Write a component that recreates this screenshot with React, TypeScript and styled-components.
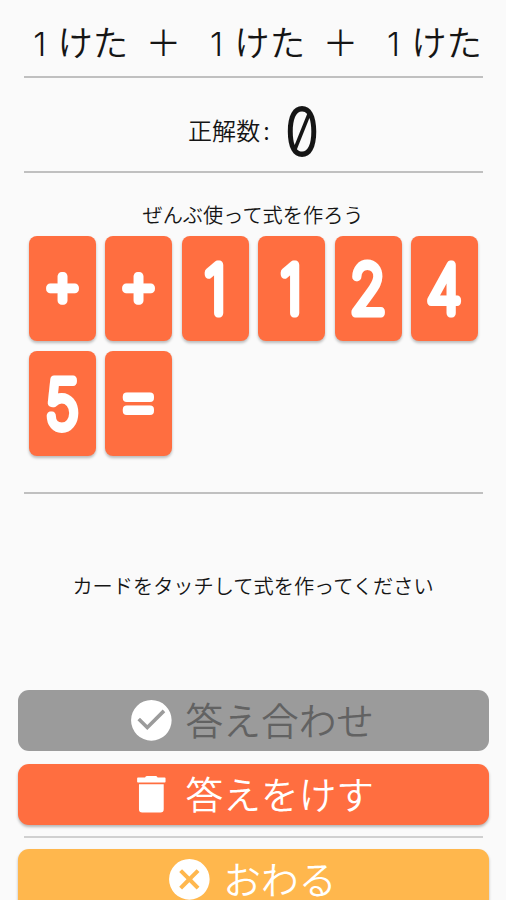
import React from "react";
import styled, { createGlobalStyle } from "styled-components";

const GlobalStyle = createGlobalStyle`
  * { box-sizing: border-box; }
  body {
    margin: 0;
    background: #fafafa;
    color: #151515;
    font-family: "Noto Sans CJK JP", "Noto Sans", sans-serif;
    font-weight: 350;
    overflow: hidden;
  }
`;

const Page = styled.main`
  width: 506px;
  height: 900px;
  overflow: hidden;
  display: flex;
  flex-direction: column;
  background: #fafafa;

  > * { flex: none; }
`;

const Title = styled.h1`
  margin: 0;
  height: 76px;
  padding: 6px 0 0 22px;
  font-size: 35.4px;
  line-height: 70px;
  font-weight: 350;
  white-space: nowrap;
  word-spacing: 0.276em;
`;

const Count = styled.span`
  display: inline-block;
  width: 35.4px;
  font: 300 33px/70px Inter, sans-serif;
  text-align: center;
`;

const Divider = styled.hr<{ $soft?: boolean }>`
  flex: none;
  width: 459px;
  height: 2px;
  margin: 0 0 0 24px;
  border: 0;
  background: ${(p) => (p.$soft ? "#d0d0d0" : "#c0c0c0")};
`;

const Score = styled.section`
  height: 93px;
  padding-left: 188px;
  display: flex;
  align-items: center;
`;

const ScoreLabel = styled.span`
  width: 93px;
  font-size: 24px;
  line-height: 36px;
  margin-top: 10px;
  letter-spacing: 0.1px;
  white-space: nowrap;
`;

const Colon = styled.span`
  margin-left: 3px;
`;

const ScoreSlot = styled.span`
  width: 42px;
  display: flex;
  justify-content: center;
  margin-top: 14px;
`;

const ScoreValue = styled.span`
  font: 400 67px/76px Inter, sans-serif;
  font-feature-settings: "zero";
  transform: scaleX(0.83);
`;

const Board = styled.section`
  height: 319px;
  padding-top: 26px;
`;

const Hint = styled.p`
  margin: 0;
  font-size: 20.2px;
  line-height: 32px;
  text-align: center;
  white-space: nowrap;
`;

const Cards = styled.div`
  margin: 5px 0 0 29px;
  display: grid;
  grid-template-columns: repeat(6, 67px);
  column-gap: 9.4px;
  row-gap: 9.5px;
`;

const Card = styled.button`
  height: 105px;
  padding: 0;
  border: 0;
  border-radius: 8px;
  background: #ff6e40;
  box-shadow: 0 2px 3px rgba(0, 0, 0, 0.26);
`;

const CardFace = styled.svg`
  display: block;
  width: 67px;
  height: 105px;
  font-family: Inter, sans-serif;
  font-weight: 100;
  text-anchor: middle;
  fill: #fff;
  stroke: #fff;
  stroke-linejoin: round;
  stroke-linecap: round;
`;

const Answer = styled.section`
  height: 195.5px;
  padding-top: 76px;
`;

const Actions = styled.section`
  display: flex;
  flex-direction: column;
`;

const Action = styled.button<{ $tone: string; $ink?: string; $flat?: boolean }>`
  flex: none;
  width: 471px;
  height: 61.5px;
  margin-left: 18px;
  padding: 0 6px 0 0;
  display: flex;
  align-items: center;
  justify-content: center;
  gap: 10px;
  border: 0;
  border-radius: 11px;
  background: ${(p) => p.$tone};
  color: ${(p) => p.$ink ?? "#fff"};
  box-shadow: ${(p) => (p.$flat ? "none" : "0 2px 3px rgba(0, 0, 0, 0.28)")};
  white-space: nowrap;

  & + & { margin-top: 12.5px; }
  & + hr { margin-top: 10.5px; }
  hr + & { margin-top: 11px; }
`;

const ActionLabel = styled.span`
  margin-bottom: 3px;
  font: 350 37.7px/38px "Noto Sans CJK JP", sans-serif;
`;

const Icon = styled.svg`
  flex: none;
  width: 48.7px;
  height: 48.7px;
  fill: #fff;
`;

const cards = ["+", "+", "1", "1", "2", "4", "5", "="];

const digitFace = { transform: "translate(33.2 77.3) scale(0.87 0.99)", fontSize: 67, strokeWidth: 9 };
const plusFace = { transform: "translate(33.5 69)", fontSize: 59, strokeWidth: 8.5 };
const equalsFace = { transform: "translate(33.5 72) scale(1 1)", fontSize: 68, strokeWidth: 8.2 };

function Glyph({ char }: { char: string }) {
  const face = char === "+" ? plusFace : char === "=" ? equalsFace : digitFace;
  return (
    <CardFace viewBox="0 0 67 105">
      <text {...face}>{char}</text>
    </CardFace>
  );
}

export default function App() {
  return (
    <Page>
      <GlobalStyle />
      <Title>
        <Count>1</Count>けた ＋ <Count>1</Count>けた ＋ <Count>1</Count>けた
      </Title>
      <Divider />
      <Score>
        <ScoreLabel>正解数<Colon>:</Colon></ScoreLabel>
        <ScoreSlot>
          <ScoreValue>0</ScoreValue>
        </ScoreSlot>
      </Score>
      <Divider />
      <Board>
        <Hint>ぜんぶ使って式を作ろう</Hint>
        <Cards>
          {cards.map((char, i) => (
            <Card key={i}>
              <Glyph char={char} />
            </Card>
          ))}
        </Cards>
      </Board>
      <Divider />
      <Answer>
        <Hint>カードをタッチして式を作ってください</Hint>
      </Answer>
      <Actions>
        <Action $tone="#9b9b9b" $ink="#626262" $flat>
          <Icon viewBox="0 0 24 24">
            <path d="M12 2a10 10 0 1 0 0 20 10 10 0 0 0 0-20zm-2 14.8-4.85-4.85 1.25-1.25L10 14.3l7.6-7.6 1.25 1.25z" />
          </Icon>
          <ActionLabel>答え合わせ</ActionLabel>
        </Action>
        <Action $tone="#ff6e40">
          <Icon viewBox="0 0 24 24">
            <path d="M5.9 7h12.2v12.4a1.6 1.6 0 0 1-1.6 1.6h-9a1.6 1.6 0 0 1-1.6-1.6zM5.4 3.7h3.5q.3-.7 1.1-.7h4q.8 0 1.1.7h3.5q.4 0 .4.4v1.7q0 .4-.4.4H5.4q-.4 0-.4-.4V4.1q0-.4.4-.4z" />
          </Icon>
          <ActionLabel>答えをけす</ActionLabel>
        </Action>
        <Divider $soft />
        <Action $tone="#ffb74d">
          <Icon viewBox="0 0 24 24">
            <path d="M12 2a10 10 0 1 0 0 20 10 10 0 0 0 0-20zm5 13.59L15.59 17 12 13.41 8.41 17 7 15.59 10.59 12 7 8.41 8.41 7 12 10.59 15.59 7 17 8.41 13.41 12z" />
          </Icon>
          <ActionLabel>おわる</ActionLabel>
        </Action>
      </Actions>
    </Page>
  );
}
